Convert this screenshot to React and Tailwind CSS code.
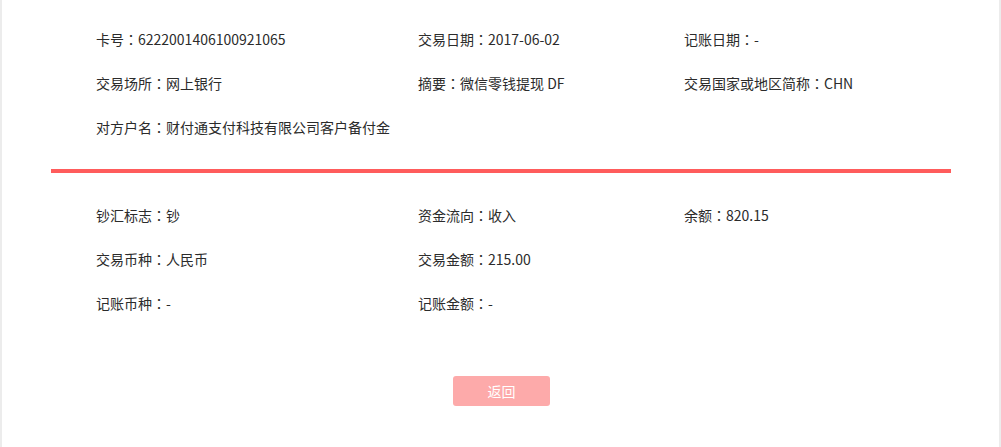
const Cell = ({ text }) => {
  if (!text) return null;
  const i = text.indexOf("：");
  if (i < 0) return <>{text}</>;
  return (
    <>
      {text.slice(0, i)}
      <span style={{ fontFamily: '"Noto Sans CJK TC", "Noto Sans CJK SC", sans-serif' }}>：</span>
      {text.slice(i + 1)}
    </>
  );
};

export default function App() {
  const sec1 = [
    ["卡号：6222001406100921065", "交易日期：2017-06-02", "记账日期：-"],
    ["交易场所：网上银行", "摘要：微信零钱提现 DF", "交易国家或地区简称：CHN"],
    ["对方户名：财付通支付科技有限公司客户备付金", "", ""],
  ];
  const sec2 = [
    ["钞汇标志：钞", "资金流向：收入", "余额：820.15"],
    ["交易币种：人民币", "交易金额：215.00", ""],
    ["记账币种：-", "记账金额：-", ""],
  ];
  const Rows = ({ rows }) => (
    <div className="pl-[45px]">
      {rows.map((r, i) => (
        <div key={i} className="flex h-[44px] items-center">
          <div className="w-[322px] shrink-0 whitespace-nowrap"><Cell text={r[0]} /></div>
          <div className="w-[266px] shrink-0 whitespace-nowrap"><Cell text={r[1]} /></div>
          <div className="whitespace-nowrap"><Cell text={r[2]} /></div>
        </div>
      ))}
    </div>
  );
  return (
    <div
      className="w-[1001px] h-[447px] bg-white border-x-2 border-[#ececec] text-[14px] text-[#2b2b2b]"
      style={{ fontFamily: '"Noto Sans CJK SC", "Noto Sans", sans-serif' }}
    >
      <div className="pl-[49px] pr-[48px] pt-[17px]">
        <Rows rows={sec1} />
        <div className="mt-[20px] h-[4px] bg-[#ff5c5c]" />
        <div className="mt-[20px]">
          <Rows rows={sec2} />
        </div>
        <div className="mt-[51px] flex justify-center">
          <button className="w-[97px] h-[30px] rounded-[3px] bg-[#fdaaaa] text-white text-[14px] ml-[1px]">
            返回
          </button>
        </div>
      </div>
    </div>
  );
}
